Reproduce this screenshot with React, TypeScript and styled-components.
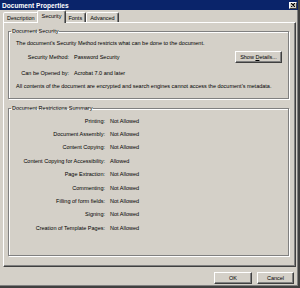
import {Fragment} from "react";
import styled, {createGlobalStyle} from "styled-components";

const GlobalStyle = createGlobalStyle`
    html, body {
        margin: 0;
        padding: 0;
        background: #d4d0c8;
    }
`

const StyledWindowDiv = styled.div`
    width: 300px;
    height: 288px;
    box-sizing: border-box;
    display: flex;
    flex-direction: column;
    background: #d4d0c8;
    border-right: 2px solid #404040;
    border-bottom: 2px solid #404040;
    box-shadow: inset -1px -1px 0 #808080;
    font-family: "Liberation Sans", Arial, sans-serif;
    font-size: 5.5px;
    color: #000;
    overflow: hidden;
`

const StyledTitleBarDiv = styled.div`
    height: 10px;
    flex-shrink: 0;
    display: flex;
    align-items: center;
    justify-content: space-between;
    padding: 0 1px 0 2px;
    background: #0a246a;
    color: #fff;
    font-size: 6.6px;
    font-weight: bold;
`

const StyledCloseButton = styled.div`
    width: 8px;
    height: 7px;
    box-sizing: border-box;
    display: flex;
    align-items: center;
    justify-content: center;
    background: #d4d0c8;
    border: 1px solid;
    border-color: #fff #404040 #404040 #fff;
`

const StyledBodyDiv = styled.div`
    display: flex;
    flex-direction: column;
    padding: 0 0 0 3px;
`

const StyledTabRowDiv = styled.div`
    display: flex;
    align-items: flex-end;
    height: 12px;
`

const StyledTabSpan = styled.span<{ $selected?: boolean }>`
    position: relative;
    box-sizing: border-box;
    display: flex;
    align-items: center;
    height: ${p => p.$selected ? 13 : 10}px;
    padding: 0 ${p => p.$selected ? 4 : 3}px ${p => p.$selected ? 2 : 0}px;
    margin: 0 ${p => p.$selected ? -2 : 0}px ${p => p.$selected ? -1 : 0}px;
    z-index: ${p => p.$selected ? 1 : 0};
    background: #d4d0c8;
    border: 1px solid;
    border-bottom: none;
    border-color: #fff #404040 transparent #fff;
    border-radius: 2px 2px 0 0;
    box-shadow: inset -1px 0 0 #808080;
`

const StyledPanelDiv = styled.div`
    box-sizing: border-box;
    margin-right: 2px;
    padding: 4px 6px 10px 4px;
    border: 1px solid;
    border-color: #fff #404040 #404040 #fff;
    box-shadow: inset -1px -1px 0 #808080;
    display: flex;
    flex-direction: column;
    gap: 5px;
`

const StyledGroupFieldset = styled.fieldset<{ $bottom: number }>`
    margin: 0;
    padding: 0 0 ${p => p.$bottom}px 0;
    border: 1px solid #808080;
    box-shadow: inset 1px 1px 0 #fff, 1px 1px 0 #fff;
    min-width: 0;
`

const StyledLegend = styled.legend`
    margin-left: 2px;
    padding: 0 1px;
    line-height: 8px;
`

const StyledNoteP = styled.p<{ $top: number }>`
    margin: ${p => p.$top}px 0 0;
    padding-left: 7px;
    line-height: 8px;
    white-space: nowrap;
`

const StyledInfoRowDiv = styled.div<{ $top: number; $height: number }>`
    display: grid;
    grid-template-columns: 60px 1fr auto;
    column-gap: 5px;
    align-items: center;
    height: ${p => p.$height}px;
    margin-top: ${p => p.$top}px;
    padding-right: 6px;
`

const StyledLabelSpan = styled.span`
    text-align: right;
    white-space: nowrap;
`

const StyledValueSpan = styled.span`
    white-space: nowrap;
`

const StyledRestrictionGridDiv = styled.div`
    display: grid;
    grid-template-columns: 96px 1fr;
    grid-auto-rows: 13.4px;
    column-gap: 5px;
    align-items: center;
    padding-top: 2px;
`

const StyledButton = styled.button<{ $width: number }>`
    width: ${p => p.$width}px;
    height: 12px;
    box-sizing: border-box;
    padding: 0;
    background: #d4d0c8;
    border: 1px solid;
    border-color: #fff #404040 #404040 #fff;
    box-shadow: inset -1px -1px 0 #808080;
    font-family: "Liberation Sans", Arial, sans-serif;
    font-size: 5.5px;
    color: #000;
    
    & > u {
        text-decoration-thickness: 0.5px;
    }
`

const StyledFooterDiv = styled.div`
    display: flex;
    justify-content: flex-end;
    gap: 5px;
    padding: 5px 4px 0 0;
`

const restrictions: [string, string][] = [
    ["Printing:", "Not Allowed"],
    ["Document Assembly:", "Not Allowed"],
    ["Content Copying:", "Not Allowed"],
    ["Content Copying for Accessibility:", "Allowed"],
    ["Page Extraction:", "Not Allowed"],
    ["Commenting:", "Not Allowed"],
    ["Filling of form fields:", "Not Allowed"],
    ["Signing:", "Not Allowed"],
    ["Creation of Template Pages:", "Not Allowed"],
]

const tabs = ["Description", "Security", "Fonts", "Advanced"]

export default function App() {
    return <>
        <GlobalStyle/>
        <StyledWindowDiv>
            <StyledTitleBarDiv>
                <span>Document Properties</span>
                <StyledCloseButton>
                    <svg width="4" height="4" viewBox="0 0 4 4">
                        <path d="M0 0L4 4M4 0L0 4" stroke="#000" strokeWidth="1.1"/>
                    </svg>
                </StyledCloseButton>
            </StyledTitleBarDiv>

            <StyledBodyDiv>
                <StyledTabRowDiv>
                    {
                        tabs.map(tab => <StyledTabSpan key={tab} $selected={tab === "Security"}>{tab}</StyledTabSpan>)
                    }
                </StyledTabRowDiv>

                <StyledPanelDiv>
                    <StyledGroupFieldset $bottom={8}>
                        <StyledLegend>Document Security</StyledLegend>
                        <StyledNoteP $top={4}>The document's Security Method restricts what can be done to the document.</StyledNoteP>
                        <StyledInfoRowDiv $top={4} $height={12}>
                            <StyledLabelSpan>Security Method:</StyledLabelSpan>
                            <StyledValueSpan>Password Security</StyledValueSpan>
                            <StyledButton $width={47}>Show <u>D</u>etails...</StyledButton>
                        </StyledInfoRowDiv>
                        <StyledInfoRowDiv $top={6} $height={8}>
                            <StyledLabelSpan>Can be Opened by:</StyledLabelSpan>
                            <StyledValueSpan>Acrobat 7.0 and later</StyledValueSpan>
                        </StyledInfoRowDiv>
                        <StyledNoteP $top={5}>All contents of the document are encrypted and search engines cannot access the document's metadata.</StyledNoteP>
                    </StyledGroupFieldset>

                    <StyledGroupFieldset $bottom={20}>
                        <StyledLegend>Document Restrictions Summary</StyledLegend>
                        <StyledRestrictionGridDiv>
                            {
                                restrictions.map(([label, value]) => <Fragment key={label}>
                                    <StyledLabelSpan>{label}</StyledLabelSpan>
                                    <StyledValueSpan>{value}</StyledValueSpan>
                                </Fragment>)
                            }
                        </StyledRestrictionGridDiv>
                    </StyledGroupFieldset>
                </StyledPanelDiv>

                <StyledFooterDiv>
                    <StyledButton $width={38}>OK</StyledButton>
                    <StyledButton $width={37}>Cancel</StyledButton>
                </StyledFooterDiv>
            </StyledBodyDiv>
        </StyledWindowDiv>
    </>
}
